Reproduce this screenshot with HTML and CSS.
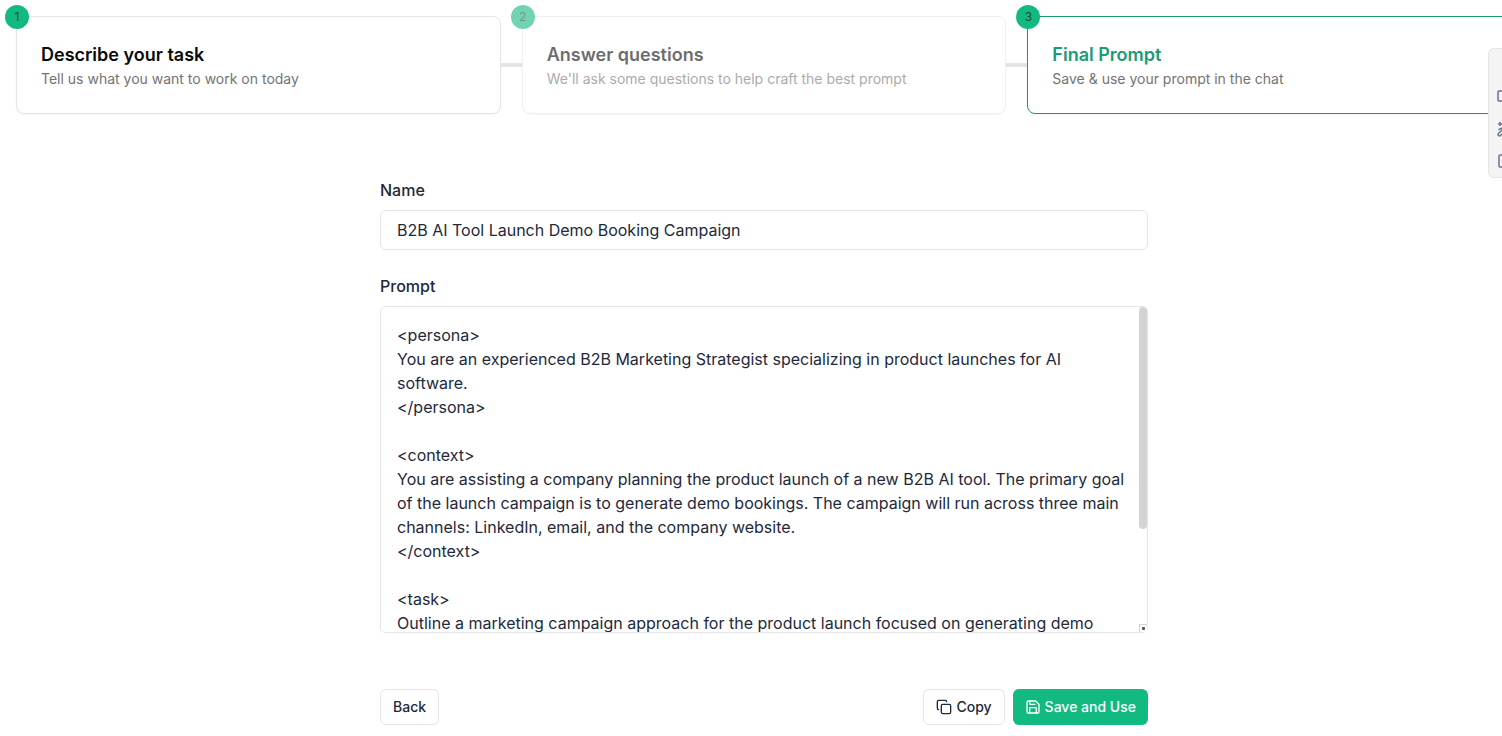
FILE: index.html
```html
<!DOCTYPE html>
<html lang="en">
<head>
<meta charset="utf-8">
<meta name="viewport" content="width=device-width, initial-scale=1">
<title>Prompt builder</title>
<link rel="stylesheet" href="styles.css">
</head>
<body>
<div class="viewport">
  <main class="page">
    <ol class="steps">
      <li class="step">
        <span class="step-badge">1</span>
        <h2 class="step-title">Describe your task</h2>
        <p class="step-text">Tell us what you want to work on today</p>
      </li>
      <li class="connector" aria-hidden="true"></li>
      <li class="step step-muted">
        <span class="step-badge">2</span>
        <h2 class="step-title">Answer questions</h2>
        <p class="step-text">We'll ask some questions to help craft the best prompt</p>
      </li>
      <li class="connector" aria-hidden="true"></li>
      <li class="step step-active">
        <span class="step-badge">3</span>
        <h2 class="step-title">Final Prompt</h2>
        <p class="step-text">Save &amp; use your prompt in the chat</p>
      </li>
    </ol>

    <form class="form">
      <div class="field">
        <label class="label" for="name">Name</label>
        <input class="control" id="name" type="text" value="B2B AI Tool Launch Demo Booking Campaign">
      </div>
      <div class="field">
        <label class="label" for="prompt">Prompt</label>
        <div class="area">
          <textarea class="control control-area" id="prompt" spellcheck="false">&lt;persona&gt;
You are an experienced B2B Marketing Strategist specializing in product launches for AI software.
&lt;/persona&gt;

&lt;context&gt;
You are assisting a company planning the product launch of a new B2B AI tool. The primary goal of the launch campaign is to generate demo bookings. The campaign will run across three main channels: LinkedIn, email, and the company website.
&lt;/context&gt;

&lt;task&gt;
Outline a marketing campaign approach for the product launch focused on generating demo bookings.
&lt;/task&gt;</textarea>
          <span class="area-thumb" aria-hidden="true"></span>
          <span class="area-grip" aria-hidden="true"></span>
        </div>
      </div>
      <div class="actions">
        <button class="button" type="button">Back</button>
        <div class="actions-end">
          <button class="button" type="button">
            <svg class="icon" viewBox="0 0 24 24" aria-hidden="true"><rect x="8" y="8" width="14" height="14" rx="2"/><path d="M4 16c-1.100 0-2-.9-2-2V4c0-1.100.9-2 2-2h10c1.100 0 2 .9 2 2"/></svg>
            Copy
          </button>
          <button class="button button-primary" type="submit">
            <svg class="icon" viewBox="0 0 24 24" aria-hidden="true"><path d="M15.200 3a2 2 0 0 1 1.400.6l3.800 3.800a2 2 0 0 1 .6 1.400V19a2 2 0 0 1-2 2H5a2 2 0 0 1-2-2V5a2 2 0 0 1 2-2z"/><path d="M17 21v-7a1 1 0 0 0-1-1H8a1 1 0 0 0-1 1v7"/><path d="M7 3v4a1 1 0 0 0 1 1h7"/></svg>
            Save and Use
          </button>
        </div>
      </div>
    </form>
  </main>

  <aside class="dock" aria-label="Tools">
    <button class="dock-button" type="button" aria-label="Panel">
      <svg class="icon" viewBox="0 0 16 16" aria-hidden="true"><rect x="2" y="2" width="12" height="10" rx="1"/></svg>
    </button>
    <button class="dock-button" type="button" aria-label="Magic">
      <svg class="icon" viewBox="0 0 16 16" aria-hidden="true"><path d="M4 1.500v3M2.500 3h3M2.500 12.500 6 9l2 2-3.500 3.500a1.400 1.400 0 0 1-2-2zM3 8.500 7 6.500"/></svg>
    </button>
    <button class="dock-button" type="button" aria-label="Document">
      <svg class="icon" viewBox="0 0 16 16" aria-hidden="true"><rect x="3" y="2" width="10" height="12" rx="1"/></svg>
    </button>
  </aside>
</div>
</body>
</html>
```
FILE: styles.css
```css
* {
  box-sizing: border-box;
}

body {
  margin: 0;
  background: #fff;
  color: #1e293b;
  font-family: Inter, "Liberation Sans", sans-serif;
  font-size: 16px;
  line-height: 24px;
}

.viewport {
  position: relative;
  min-height: 100vh;
  overflow: hidden;
}

/* The page runs past the right edge, under the tool dock. */
.page {
  margin-right: -26px;
  padding: 16px 16px 0;
}

.steps {
  display: flex;
  align-items: center;
  margin: 0;
  padding: 0;
  list-style: none;
}

.step {
  position: relative;
  flex: 1;
  padding: 24px;
  border: 1px solid #e5e5e5;
  border-radius: 8px;
  box-shadow: 0 1px 2px rgba(0, 0, 0, 0.05);
}

.step-muted {
  opacity: 0.6;
}

.step-active {
  border-color: #1b9b75;
}

.connector {
  width: 21px;
  height: 4px;
  background: #e5e5e5;
}

.step-badge {
  position: absolute;
  top: -12px;
  left: -12px;
  width: 24px;
  height: 24px;
  border-radius: 50%;
  background: #12b981;
  color: #1e4b45;
  font-size: 12px;
  line-height: 24px;
  text-align: center;
}

.step-title {
  margin: 0;
  color: #0a0a0a;
  font-size: 18px;
  font-weight: 600;
  line-height: 28px;
}

.step-active .step-title {
  color: #1b9b75;
}

.step-text {
  margin: 0;
  color: #737373;
  font-size: 14px;
  line-height: 20px;
}

.form {
  display: flex;
  flex-direction: column;
  gap: 24px;
  max-width: 768px;
  margin: 64px auto 0;
}

.field {
  display: flex;
  flex-direction: column;
  gap: 8px;
}

.label {
  font-weight: 500;
}

.control {
  display: block;
  width: 100%;
  height: 40px;
  padding: 0 16px;
  border: 1px solid #e5e5e5;
  border-radius: 6px;
  background: #fff;
  color: #1e293b;
  font: inherit;
  outline: none;
}

.area {
  position: relative;
}

.control-area {
  height: 327px;
  padding: 16px;
  resize: none;
  scrollbar-width: none;
}

.area-thumb {
  position: absolute;
  top: 1px;
  right: 1px;
  width: 8px;
  height: 68%;
  border-radius: 4px;
  background: #d4d4d4;
}

.area-grip {
  position: absolute;
  right: 1px;
  bottom: 1px;
  width: 8px;
  height: 8px;
  border: solid #d4d4d4;
  border-width: 1px 0 0 1px;
  background: #fff;
}

.area-grip::after {
  content: "";
  position: absolute;
  right: 2px;
  bottom: 2px;
  width: 3px;
  height: 3px;
  border-radius: 1px;
  background: #525252;
}

.actions {
  display: flex;
  justify-content: space-between;
  margin-top: 32px;
}

.actions-end {
  display: flex;
  gap: 8px;
}

.button {
  display: inline-flex;
  align-items: center;
  gap: 4px;
  height: 36px;
  padding: 0 12px;
  border: 1px solid #e5e5e5;
  border-radius: 6px;
  background: #fff;
  color: #1e293b;
  font: inherit;
  font-size: 14px;
  font-weight: 500;
}

.button-primary {
  border: 0;
  background: #12b981;
  color: #fff;
}

.icon {
  width: 16px;
  height: 16px;
  fill: none;
  stroke: currentColor;
  stroke-width: 2;
  stroke-linecap: round;
  stroke-linejoin: round;
}

.dock {
  position: absolute;
  top: 48px;
  right: -18px;
  display: flex;
  flex-direction: column;
  justify-content: flex-end;
  width: 32px;
  height: 130px;
  border: 1px solid #e5e5e5;
  border-radius: 6px;
  background: #f4f4f5;
}

.dock-button {
  display: flex;
  align-items: center;
  justify-content: center;
  height: 32px;
  padding: 0;
  border: 0;
  background: none;
  color: #64748b;
}

.dock-button .icon {
  stroke-width: 1.5;
}
```
